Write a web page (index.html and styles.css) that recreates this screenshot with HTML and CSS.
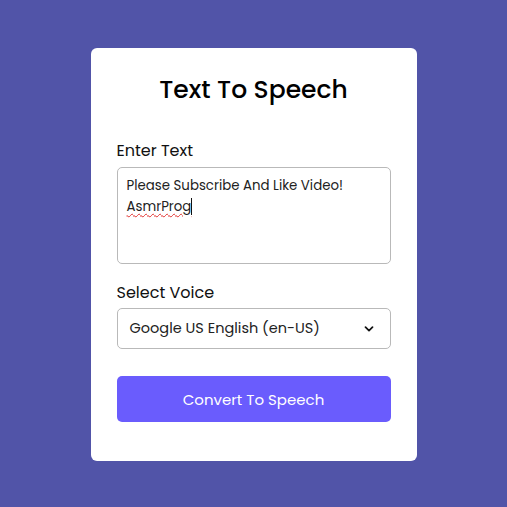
FILE: index.html
```html
<!DOCTYPE html>
<html lang="en">
<head>
<meta charset="utf-8">
<title>Text To Speech</title>
<link rel="stylesheet" href="styles.css">
</head>
<body>
  <main class="card">
    <h1 class="title">Text To Speech</h1>
    <label class="label" for="text">Enter Text</label>
    <div class="textbox" id="text" role="textbox" aria-multiline="true">Please Subscribe And Like Video!<br><span class="misspelled">AsmrProg</span><span class="caret"></span></div>
    <label class="label label-voice" for="voice">Select Voice</label>
    <div class="select" id="voice">
      <span class="select-value">Google US English (en-US)</span>
      <svg class="chevron" width="10" height="6" viewBox="0 0 10 6" aria-hidden="true"><path d="M1.5 1.2l3.5 3.5 3.5-3.5" fill="none" stroke="#111" stroke-width="1.7" stroke-linecap="round" stroke-linejoin="round"/></svg>
    </div>
    <button class="button" type="button">Convert To Speech</button>
  </main>
</body>
</html>
```
FILE: styles.css
```css
html, body {
  margin: 0;
  padding: 0;
}

body {
  box-sizing: border-box;
  min-height: 100vh;
  padding-top: 2px;
  background: #5154a8;
  display: flex;
  align-items: center;
  justify-content: center;
  font-family: "Poppins", "Inter", "Noto Sans", sans-serif;
  color: #111;
}

.card {
  box-sizing: border-box;
  width: 326px;
  height: 413px;
  background: #fff;
  border-radius: 6px;
  padding: 24px 26px 39px;
  display: flex;
  flex-direction: column;
}

.title {
  margin: 0;
  text-align: center;
  font-size: 25px;
  font-weight: 500;
  line-height: 36px;
  color: #000;
}

.label {
  margin-top: 31px;
  font-size: 16px;
  line-height: 24px;
  color: #111;
}

.label-voice {
  margin-top: 17px;
}

.textbox {
  box-sizing: border-box;
  margin-top: 4px;
  height: 97px;
  border: 1px solid #b9b9b9;
  border-radius: 5px;
  padding: 7px 9px;
  font-size: 13.33px;
  line-height: 21px;
  color: #222;
}

.misspelled {
  text-decoration: underline wavy #e0302e;
  text-decoration-thickness: 1px;
  text-underline-offset: 2px;
}

.caret {
  display: inline-block;
  width: 1px;
  height: 17px;
  background: #111;
  vertical-align: -4px;
}

.select {
  box-sizing: border-box;
  margin-top: 3px;
  height: 41px;
  border: 1px solid #b9b9b9;
  border-radius: 5px;
  padding: 0 16px 0 12px;
  display: flex;
  align-items: center;
  justify-content: space-between;
  font-size: 14.5px;
  color: #222;
}

.chevron {
  flex: none;
}

.button {
  margin-top: 27px;
  height: 46px;
  border: 0;
  border-radius: 5px;
  background: #6a5cfd;
  color: #fff;
  font-family: inherit;
  font-size: 15px;
  cursor: pointer;
}
```
